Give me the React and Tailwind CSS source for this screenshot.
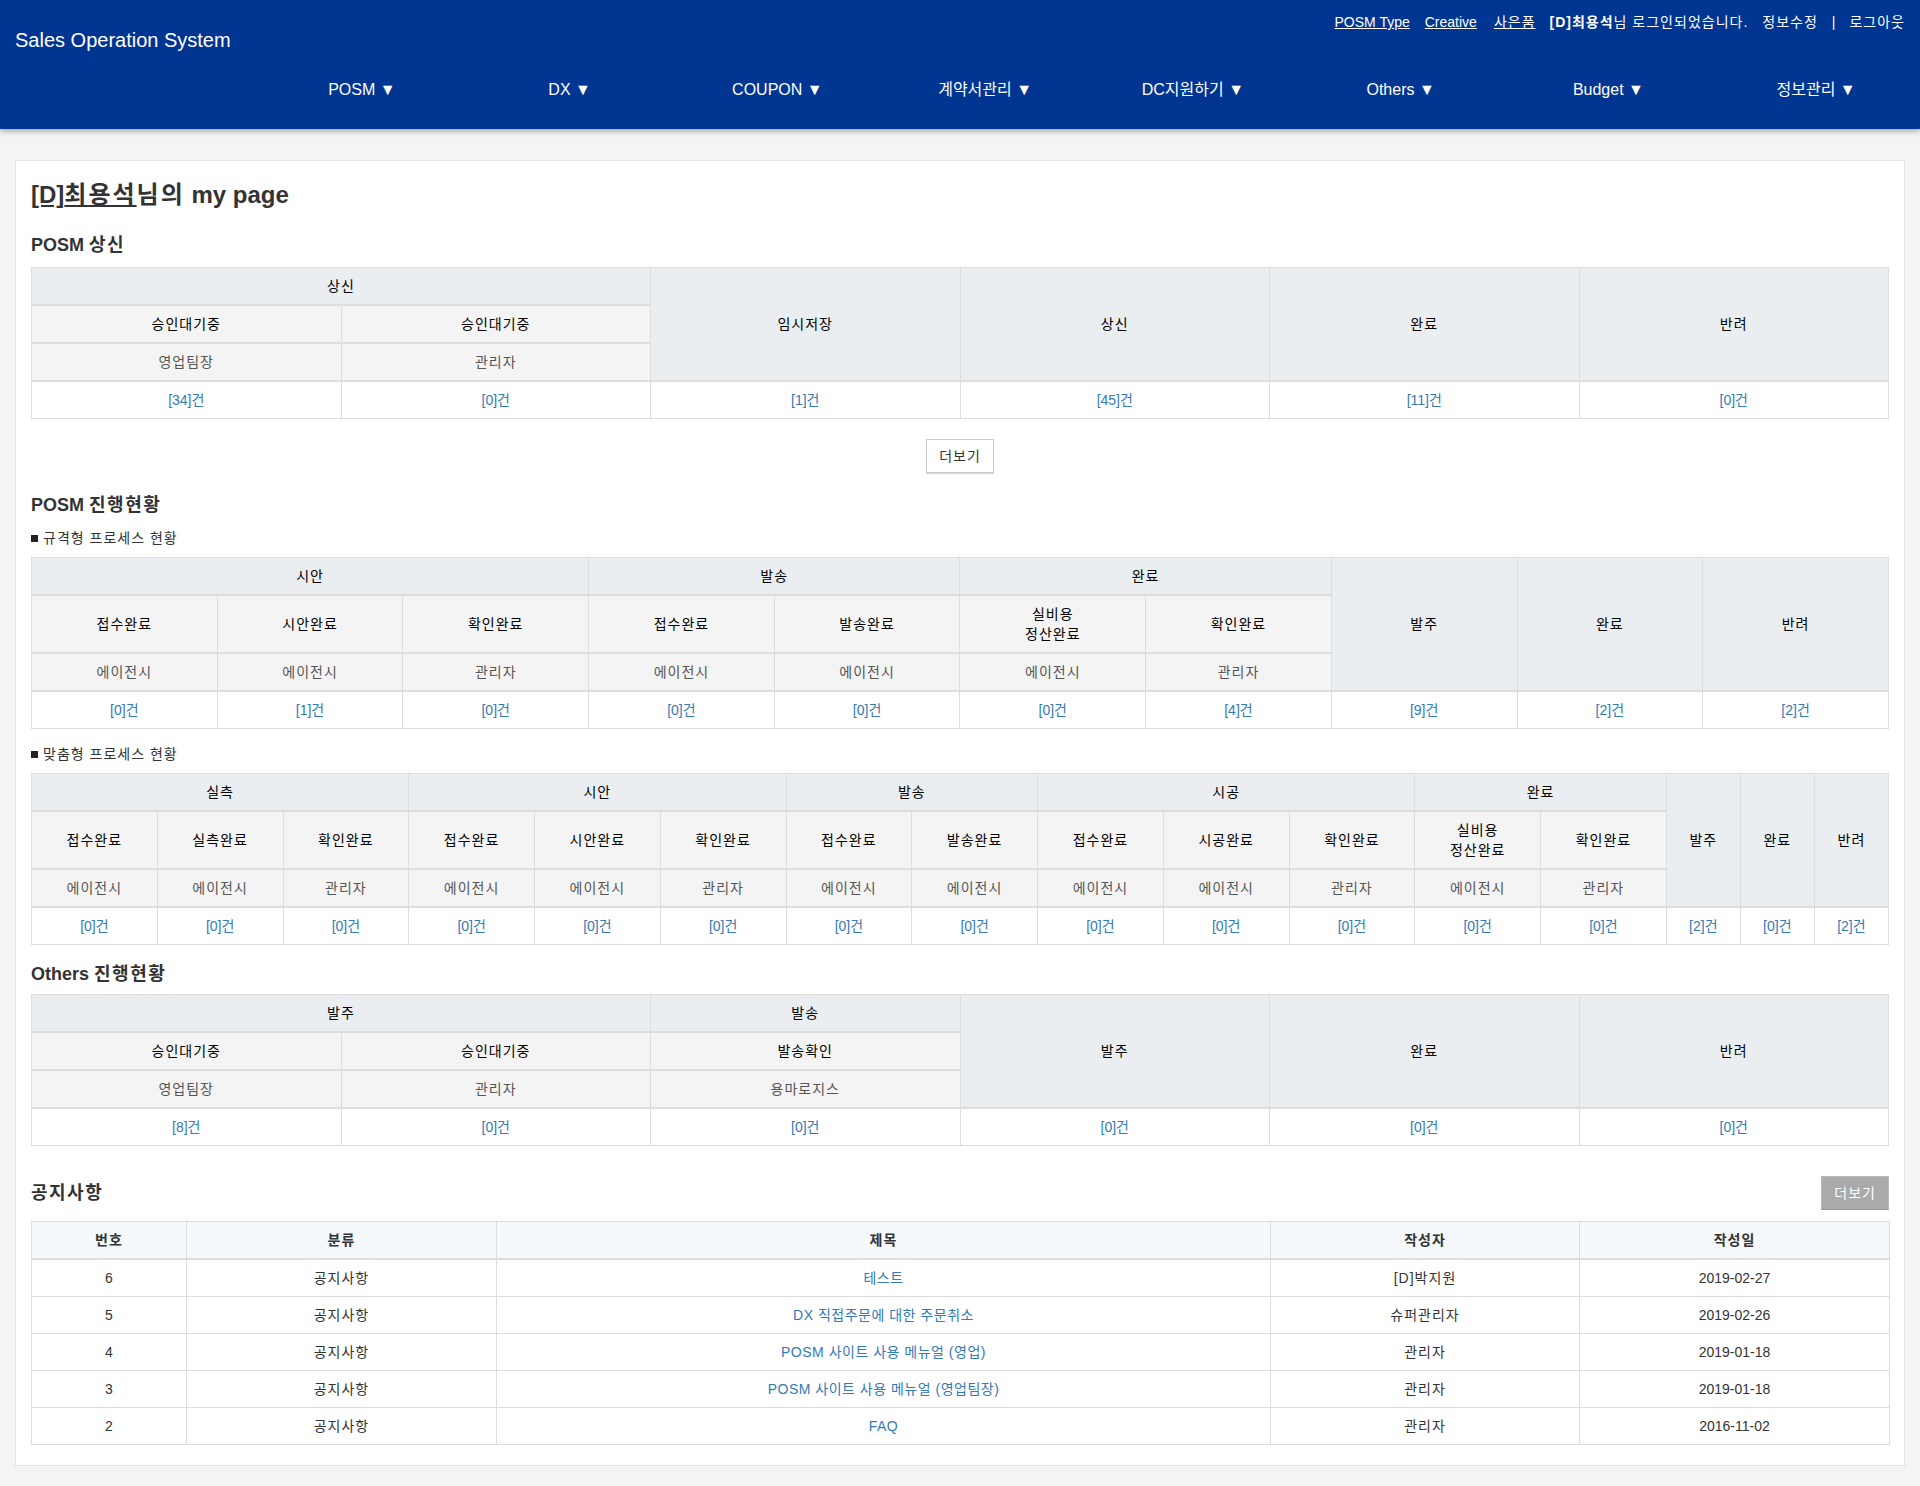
import React from "react";

const HEAD_CLS = {
  h1: "border border-b-2 border-[#ddd] bg-[#ebeef1] px-2 py-2 text-center align-middle font-normal leading-5 tracking-[1px] text-black",
  h2: "border border-b-2 border-[#ddd] bg-[#f4f4f4] px-2 py-2 text-center align-middle font-normal leading-5 tracking-[1px] text-black",
  h3: "border border-b-2 border-[#ddd] bg-[#f4f4f4] px-2 py-2 text-center align-middle font-normal leading-5 tracking-[1px] text-[#555]",
};
const TD_CLS = "border border-[#ddd] bg-white px-2 py-2 text-center align-middle leading-5 text-[#337ab7]";

function StatusTable({ rows, data, cols }) {
  return (
    <table className="w-full table-fixed border-collapse text-[14px]">
      {cols ? (
        <colgroup>
          {cols.map((c, i) => (
            <col key={i} className={c} />
          ))}
        </colgroup>
      ) : null}
      <thead>
        {rows.map((r, ri) => (
          <tr key={ri}>
            {r.map((c, ci) => (
              <th key={ci} colSpan={c.cs || 1} rowSpan={c.rs || 1} className={HEAD_CLS[c.k]}>
                {c.t.split("\n").map((line, li) => (
                  <React.Fragment key={li}>
                    {li > 0 ? <br /> : null}
                    {line}
                  </React.Fragment>
                ))}
              </th>
            ))}
          </tr>
        ))}
      </thead>
      <tbody>
        <tr>
          {data.map((d, i) => (
            <td key={i} className={TD_CLS}>
              <a href="#">{d}</a>
            </td>
          ))}
        </tr>
      </tbody>
    </table>
  );
}

const t1rows = [
  [
    { t: "상신", cs: 2, k: "h1" },
    { t: "임시저장", rs: 3, k: "h1" },
    { t: "상신", rs: 3, k: "h1" },
    { t: "완료", rs: 3, k: "h1" },
    { t: "반려", rs: 3, k: "h1" },
  ],
  [
    { t: "승인대기중", k: "h2" },
    { t: "승인대기중", k: "h2" },
  ],
  [
    { t: "영업팀장", k: "h3" },
    { t: "관리자", k: "h3" },
  ],
];
const t1data = ["[34]건", "[0]건", "[1]건", "[45]건", "[11]건", "[0]건"];

const t2rows = [
  [
    { t: "시안", cs: 3, k: "h1" },
    { t: "발송", cs: 2, k: "h1" },
    { t: "완료", cs: 2, k: "h1" },
    { t: "발주", rs: 3, k: "h1" },
    { t: "완료", rs: 3, k: "h1" },
    { t: "반려", rs: 3, k: "h1" },
  ],
  [
    { t: "접수완료", k: "h2" },
    { t: "시안완료", k: "h2" },
    { t: "확인완료", k: "h2" },
    { t: "접수완료", k: "h2" },
    { t: "발송완료", k: "h2" },
    { t: "실비용\n정산완료", k: "h2" },
    { t: "확인완료", k: "h2" },
  ],
  [
    { t: "에이전시", k: "h3" },
    { t: "에이전시", k: "h3" },
    { t: "관리자", k: "h3" },
    { t: "에이전시", k: "h3" },
    { t: "에이전시", k: "h3" },
    { t: "에이전시", k: "h3" },
    { t: "관리자", k: "h3" },
  ],
];
const t2data = ["[0]건", "[1]건", "[0]건", "[0]건", "[0]건", "[0]건", "[4]건", "[9]건", "[2]건", "[2]건"];

const t3rows = [
  [
    { t: "실측", cs: 3, k: "h1" },
    { t: "시안", cs: 3, k: "h1" },
    { t: "발송", cs: 2, k: "h1" },
    { t: "시공", cs: 3, k: "h1" },
    { t: "완료", cs: 2, k: "h1" },
    { t: "발주", rs: 3, k: "h1" },
    { t: "완료", rs: 3, k: "h1" },
    { t: "반려", rs: 3, k: "h1" },
  ],
  [
    { t: "접수완료", k: "h2" },
    { t: "실측완료", k: "h2" },
    { t: "확인완료", k: "h2" },
    { t: "접수완료", k: "h2" },
    { t: "시안완료", k: "h2" },
    { t: "확인완료", k: "h2" },
    { t: "접수완료", k: "h2" },
    { t: "발송완료", k: "h2" },
    { t: "접수완료", k: "h2" },
    { t: "시공완료", k: "h2" },
    { t: "확인완료", k: "h2" },
    { t: "실비용\n정산완료", k: "h2" },
    { t: "확인완료", k: "h2" },
  ],
  [
    { t: "에이전시", k: "h3" },
    { t: "에이전시", k: "h3" },
    { t: "관리자", k: "h3" },
    { t: "에이전시", k: "h3" },
    { t: "에이전시", k: "h3" },
    { t: "관리자", k: "h3" },
    { t: "에이전시", k: "h3" },
    { t: "에이전시", k: "h3" },
    { t: "에이전시", k: "h3" },
    { t: "에이전시", k: "h3" },
    { t: "관리자", k: "h3" },
    { t: "에이전시", k: "h3" },
    { t: "관리자", k: "h3" },
  ],
];
const t3data = [
  "[0]건", "[0]건", "[0]건", "[0]건", "[0]건", "[0]건", "[0]건", "[0]건", "[0]건", "[0]건", "[0]건", "[0]건", "[0]건",
  "[2]건", "[0]건", "[2]건",
];
const t3cols = [
  "w-[125.7px]", "w-[125.7px]", "w-[125.7px]", "w-[125.7px]", "w-[125.7px]", "w-[125.7px]", "w-[125.7px]",
  "w-[125.7px]", "w-[125.7px]", "w-[125.7px]", "w-[125.7px]", "w-[125.7px]", "w-[125.7px]",
  "w-[74px]", "w-[74px]", "w-[74px]",
];

const t4rows = [
  [
    { t: "발주", cs: 2, k: "h1" },
    { t: "발송", k: "h1" },
    { t: "발주", rs: 3, k: "h1" },
    { t: "완료", rs: 3, k: "h1" },
    { t: "반려", rs: 3, k: "h1" },
  ],
  [
    { t: "승인대기중", k: "h2" },
    { t: "승인대기중", k: "h2" },
    { t: "발송확인", k: "h2" },
  ],
  [
    { t: "영업팀장", k: "h3" },
    { t: "관리자", k: "h3" },
    { t: "용마로지스", k: "h3" },
  ],
];
const t4data = ["[8]건", "[0]건", "[0]건", "[0]건", "[0]건", "[0]건"];

const notices = [
  ["6", "공지사항", "테스트", "[D]박지원", "2019-02-27"],
  ["5", "공지사항", "DX 직접주문에 대한 주문취소", "슈퍼관리자", "2019-02-26"],
  ["4", "공지사항", "POSM 사이트 사용 메뉴얼 (영업)", "관리자", "2019-01-18"],
  ["3", "공지사항", "POSM 사이트 사용 메뉴얼 (영업팀장)", "관리자", "2019-01-18"],
  ["2", "공지사항", "FAQ", "관리자", "2016-11-02"],
];

const navItems = ["POSM", "DX", "COUPON", "계약서관리", "DC지원하기", "Others", "Budget", "정보관리"];

const NTH = "border border-b-2 border-[#ddd] bg-[#f5f9fc] px-2 py-2 text-center font-bold leading-5 tracking-[1px] text-[#333]";
const NTD = "border border-[#ddd] px-2 py-2 text-center leading-5 text-[#333]";
const NTDK = "border border-[#ddd] px-2 py-2 text-center leading-5 tracking-[1px] text-[#333]";

function Label({ children }) {
  return (
    <div className="flex items-center text-[14px] leading-5 text-[#333]">
      <span className="mr-[5px] inline-block h-[7px] w-[7px] bg-[#222]" />
      <span className="tracking-[1px]">{children}</span>
    </div>
  );
}

export default function App() {
  return (
    <div className="min-h-[1486px] bg-[#f4f4f4] font-['Liberation_Sans','Noto_Sans_CJK_KR',sans-serif] text-[14px] text-[#333]">
      <header className="relative z-10 h-[129px] bg-[#003591] text-white shadow-[0_2px_6px_rgba(0,0,0,0.35)]">
        <div className="flex items-start justify-between">
          <div className="pl-[15px] pt-[29px] text-[20px] leading-[23px]">Sales Operation System</div>
          <div className="flex items-center pr-[15px] pt-[12px] text-[14px] leading-5">
            <a href="#" className="underline">POSM Type</a>
            <a href="#" className="ml-[15px] underline">Creative</a>
            <a href="#" className="ml-[17px] underline tracking-[1px]">사은품</a>
            <span className="ml-[14px] tracking-[1px]">
              <b>[D]최용석</b>님 로그인되었습니다.
            </span>
            <a href="#" className="ml-[14px] tracking-[1px]">정보수정</a>
            <span className="mx-[14px]">|</span>
            <a href="#" className="tracking-[1px]">로그아웃</a>
          </div>
        </div>
        <nav className="ml-[258px] mt-[28px] grid grid-cols-8 text-[16px] leading-5">
          {navItems.map((n) => (
            <div key={n} className="text-center">
              {n} ▼
            </div>
          ))}
        </nav>
      </header>

      <div className="px-[15px] pb-[20px] pt-[31px]">
        <div className="border border-[#e3e3e3] bg-white px-[15px] pb-[20px] pt-[21px]">
          <h1 className="text-[24px] font-bold leading-[26px] text-[#333]">
            <a href="#" className="underline">
              [D]<span className="tracking-[2px]">최용석</span>
            </a>
            <span className="tracking-[2px]">님의</span> my page
          </h1>

          <h3 className="mt-[27px] text-[18px] font-bold leading-5 text-[#333]">
            POSM <span className="tracking-[1.5px]">상신</span>
          </h3>
          <div className="mt-[12px]">
            <StatusTable rows={t1rows} data={t1data} />
          </div>
          <div className="mt-[20px] flex justify-center">
            <button className="h-[34px] border border-[#ccc] bg-white px-3 text-[14px] tracking-[1px] text-[#333] shadow-[0_1px_1px_rgba(0,0,0,0.15)]">
              더보기
            </button>
          </div>

          <h3 className="mt-[22px] text-[18px] font-bold leading-5 text-[#333]">
            POSM <span className="tracking-[1.5px]">진행현황</span>
          </h3>
          <div className="mt-[13px]">
            <Label>규격형 프로세스 현황</Label>
          </div>
          <div className="mt-[9px]">
            <StatusTable rows={t2rows} data={t2data} />
          </div>
          <div className="mt-[15px]">
            <Label>맞춤형 프로세스 현황</Label>
          </div>
          <div className="mt-[9px]">
            <StatusTable rows={t3rows} data={t3data} cols={t3cols} />
          </div>

          <h3 className="mt-[19px] text-[18px] font-bold leading-5 text-[#333]">
            Others <span className="tracking-[1.5px]">진행현황</span>
          </h3>
          <div className="mt-[10px]">
            <StatusTable rows={t4rows} data={t4data} />
          </div>

          <div className="mt-[30px] flex items-center justify-between">
            <h3 className="text-[18px] font-bold leading-5 tracking-[1.5px] text-[#333]">공지사항</h3>
            <button className="h-[34px] border border-[#b9b9b9] border-b-[#999] bg-[#aaaaaa] px-3 text-[14px] tracking-[1px] text-white">
              더보기
            </button>
          </div>
          <table className="mt-[11px] w-full table-fixed border-collapse text-[14px]">
            <colgroup>
              <col className="w-[155px]" />
              <col className="w-[310px]" />
              <col className="w-[774px]" />
              <col className="w-[309px]" />
              <col className="w-[310px]" />
            </colgroup>
            <thead>
              <tr>
                <th className={NTH}>번호</th>
                <th className={NTH}>분류</th>
                <th className={NTH}>제목</th>
                <th className={NTH}>작성자</th>
                <th className={NTH}>작성일</th>
              </tr>
            </thead>
            <tbody>
              {notices.map((r) => (
                <tr key={r[0]}>
                  <td className={NTD}>{r[0]}</td>
                  <td className={NTDK}>{r[1]}</td>
                  <td className="border border-[#ddd] px-2 py-2 text-center leading-5 tracking-[0.5px] text-[#337ab7]">
                    <a href="#">{r[2]}</a>
                  </td>
                  <td className={NTDK}>{r[3]}</td>
                  <td className={NTD}>{r[4]}</td>
                </tr>
              ))}
            </tbody>
          </table>
        </div>
      </div>
    </div>
  );
}
